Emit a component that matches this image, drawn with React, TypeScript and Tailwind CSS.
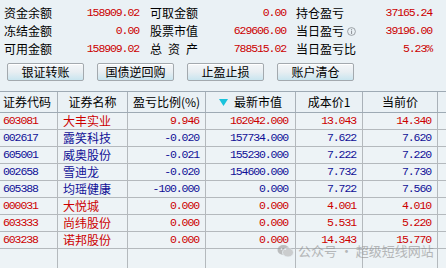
import React from "react";

const cjk = "font-['Noto_Sans_CJK_SC',sans-serif]";
const mono = "font-['Liberation_Mono',monospace] text-[11.5px] tracking-[-1.1px]";

type Row = { code: string; name: string; ratio: string; mv: string; cost: string; cur: string; red: boolean };
const rows: Row[] = [
  { code: "603081", name: "大丰实业", ratio: "9.946", mv: "162042.000", cost: "13.043", cur: "14.340", red: true },
  { code: "002617", name: "露笑科技", ratio: "-0.020", mv: "157734.000", cost: "7.622", cur: "7.620", red: false },
  { code: "605001", name: "威奥股份", ratio: "-0.021", mv: "155230.000", cost: "7.222", cur: "7.220", red: false },
  { code: "002658", name: "雪迪龙", ratio: "-0.020", mv: "154600.000", cost: "7.732", cur: "7.730", red: false },
  { code: "605388", name: "均瑶健康", ratio: "-100.000", mv: "0.000", cost: "7.722", cur: "7.560", red: false },
  { code: "000031", name: "大悦城", ratio: "0.000", mv: "0.000", cost: "4.001", cur: "4.010", red: true },
  { code: "603333", name: "尚纬股份", ratio: "0.000", mv: "0.000", cost: "5.531", cur: "5.220", red: true },
  { code: "603238", name: "诺邦股份", ratio: "0.000", mv: "0.000", cost: "14.343", cur: "15.770", red: true },
];

const info = [
  ["资金余额", "158909.02", "可取金额", "0.00", "持仓盈亏", "37165.24"],
  ["冻结金额", "0.00", "股票市值", "629606.00", "当日盈亏", "39196.00"],
  ["可用金额", "158909.02", "总资产", "788515.02", "当日盈亏比", "5.23%"],
];

function InfoIcon() {
  return (
    <svg width="11" height="11" viewBox="0 0 11 11" className="ml-[3px]">
      <circle cx="5.5" cy="5.5" r="4.8" fill="none" stroke="#8a8f94" strokeWidth="1" />
      <rect x="5" y="2.3" width="1.2" height="1.2" fill="#8a8f94" />
      <rect x="5" y="4.4" width="1.2" height="4.2" fill="#8a8f94" />
    </svg>
  );
}

function Btn({ label }: { label: string }) {
  return (
    <div className="w-[77px] h-[18px] rounded-[2px] border border-[#a3a9ae] bg-gradient-to-b from-[#f4f7f9] via-[#e8eef2] to-[#c9e5ef] flex items-center justify-center shadow-[inset_0_1px_0_#ffffff]">
      <span className={`${cjk} text-[12px] leading-none text-black`}>{label}</span>
    </div>
  );
}

const colW = ["w-[58px]", "w-[70px]", "w-[78px]", "w-[90px]", "w-[67px]", "w-[75px]"];

export default function App() {
  return (
    <div className="relative w-[446px] h-[268px] overflow-hidden bg-[#eaf1f5] flex flex-col">
      <div className="pt-[4px] flex flex-col">
        {info.map((r, i) => (
          <div key={i} className="h-[18px] flex items-center pl-[4px] text-[12px]">
            <span className={`${cjk} w-[48px] text-black whitespace-nowrap`}>{r[0]}</span>
            <span className={`${mono} w-[87px] text-right text-[#cc0000]`}>{r[1]}</span>
            <span className={`${cjk} ml-[11px] w-[48px] text-black whitespace-nowrap ${i === 2 ? "tracking-[6px]" : ""}`}>{r[2]}</span>
            <span className={`${mono} w-[88px] text-right text-[#cc0000]`}>{r[3]}</span>
            <span className={`${cjk} ml-[10px] w-[60px] text-black whitespace-nowrap flex items-center`}>
              {r[4]}
              {i === 1 && <InfoIcon />}
            </span>
            <span className={`${mono} w-[76px] text-right text-[#cc0000]`}>{r[5]}</span>
          </div>
        ))}
      </div>
      <div className="mt-[5px] pl-[7px] flex gap-[13px]">
        <Btn label="银证转账" />
        <Btn label="国债逆回购" />
        <Btn label="止盈止损" />
        <Btn label="账户清仓" />
      </div>
      <div className="mt-[10px] flex-1 flex flex-col bg-[#edf3f6]">
        <div className="h-[22px] flex border-y border-[#9eaab4] bg-[#eaf1f5]">
          {["证券代码", "证券名称", "盈亏比例(%)", "最新市值", "成本价1", "当前价"].map((h, i) => (
            <div key={i} className={`${colW[i]} h-full border-r border-[#a9b1b8] flex items-center ${i === 0 ? "pl-[3px]" : "justify-center"}`}>
              {i === 3 && (
                <svg width="9" height="7" viewBox="0 0 9 7" className="mr-[6px]">
                  <polygon points="0,0 9,0 4.5,7" fill="#19c3dc" />
                </svg>
              )}
              <span className={`${cjk} text-[12px] text-black whitespace-nowrap`}>{h}</span>
            </div>
          ))}
          <div className="flex-1" />
        </div>
        {rows.map((r) => {
          const c = r.red ? "text-[#cc0000]" : "text-[#101096]";
          return (
            <div key={r.code} className={`h-[17px] flex border-b border-[#b4b9bd] ${c}`}>
              <div className={`${colW[0]} border-r border-[#b4b9bd] flex items-center pl-[3px] ${mono}`}>{r.code}</div>
              <div className={`${colW[1]} border-r border-[#b4b9bd] flex items-center pl-[5px] ${cjk} text-[12px]`}>{r.name}</div>
              <div className={`${colW[2]} border-r border-[#b4b9bd] flex items-center justify-end pr-[6px] ${mono}`}>{r.ratio}</div>
              <div className={`${colW[3]} border-r border-[#b4b9bd] flex items-center justify-end pr-[7px] ${mono}`}>{r.mv}</div>
              <div className={`${colW[4]} border-r border-[#b4b9bd] flex items-center justify-end pr-[6px] ${mono}`}>{r.cost}</div>
              <div className={`${colW[5]} border-r border-[#b4b9bd] flex items-center justify-end pr-[6px] ${mono}`}>{r.cur}</div>
              <div className="flex-1" />
            </div>
          );
        })}
        <div className="flex-1 flex">
          {colW.map((w, i) => (
            <div key={i} className={`${w} border-r border-[#b4b9bd]`} />
          ))}
        </div>
      </div>
      <div className="absolute left-[277px] top-[241px] flex items-center opacity-60">
        <svg width="17" height="14" viewBox="0 0 17 14">
          <ellipse cx="6.5" cy="6" rx="6" ry="5" fill="#9a9a9a" />
          <ellipse cx="11" cy="8.5" rx="5.5" ry="4.5" fill="#b5b5b5" stroke="#eaf1f5" strokeWidth="0.8" />
          <circle cx="4.5" cy="5" r="0.9" fill="#eaf1f5" />
          <circle cx="8.3" cy="5" r="0.9" fill="#eaf1f5" />
        </svg>
        <span className={`${cjk} ml-[4px] text-[13px] text-[#8f8f8f] whitespace-nowrap`}>公众号 · 超级短线网站</span>
      </div>
    </div>
  );
}
